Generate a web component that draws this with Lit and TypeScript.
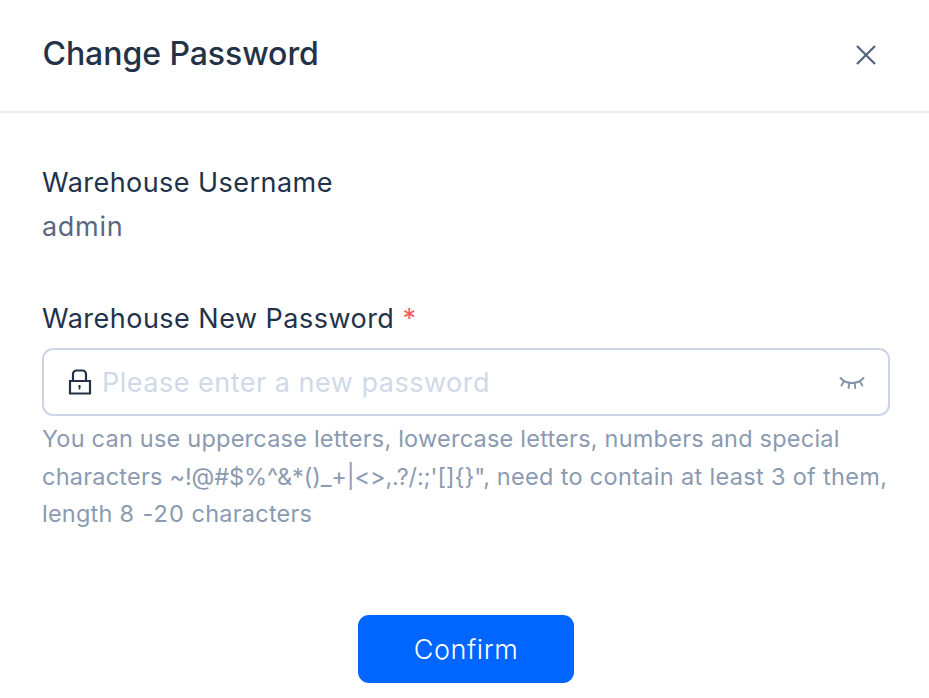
import { LitElement, html, css } from "lit";
import { customElement } from "lit/decorators.js";

@customElement("app-root")
export class AppRoot extends LitElement {
  static styles = css`
    :host { display: block; height: 698px; overflow: hidden; background: #fff; color: #233248; font-family: Inter, sans-serif; }
    * { box-sizing: border-box; }
    header { display: flex; justify-content: space-between; align-items: center; height: 113px; padding: 0 53px 3px 42.5px; border-bottom: 2px solid #ebeff4; }
    h1 { margin: 0; font-size: 32px; line-height: 40px; font-weight: 500; letter-spacing: -0.06px; }
    button { font: inherit; border: 0; padding: 0; background: none; color: inherit; }
    svg { display: block; fill: none; stroke: currentColor; }
    .close { color: #56647d; margin-top: 1px; }
    main { padding: 48px 39px 0 42px; }
    .label { font-size: 27px; line-height: 44px; letter-spacing: 0.45px; white-space: nowrap; }
    .value { font-size: 27px; line-height: 44px; color: #5a6880; letter-spacing: 0.7px; }
    .field { margin-top: 48px; letter-spacing: 0.48px; }
    .star { color: #ff5c5c; }
    .input { display: flex; align-items: center; height: 68px; margin-top: 7px; padding: 0 23px 0 24px; border: 2px solid #cbd5e6; border-radius: 11px; }
    .placeholder { flex: 1; margin-left: 10px; font-size: 27px; color: #d0d9e7; letter-spacing: 0.5px; }
    .eye { color: #8796ad; margin-top: 2px; }
    .hint { margin-top: 4px; font-size: 23.5px; line-height: 37.5px; color: #8b9ab0; letter-spacing: 0.22px; white-space: nowrap; }
    .symbols { letter-spacing: -0.1px; }
    .clause { letter-spacing: 0.32px; }
    .range { letter-spacing: 1px; }
    .confirm { display: block; width: 216px; height: 68px; margin: 82px auto 0; padding-top: 2px; border-radius: 11px; background: #0066ff; color: #fff; font-size: 27px; font-weight: 350; letter-spacing: 0.55px; }
  `;
  render() {
    return html`
      <header><h1>Change Password</h1>
        <button class="close" aria-label="Close"><svg width="20" height="20" viewBox="0 0 20 20" stroke-width="2.3"><path d="M1 1L19 19M19 1L1 19"/></svg></button>
      </header>
      <main>
        <div class="label">Warehouse Username</div>
        <div class="value">admin</div>
        <div class="label field">Warehouse New Password <span class="star">*</span></div>
        <div class="input">
          <svg width="24" height="28" viewBox="0 0 24 28" stroke-width="2.2"><path d="M2 13H22V25.5H2ZM5 13V6a3.5 3.5 0 0 1 3.5-3.5h6a3.5 3.5 0 0 1 3.5 3.5v7"/><path d="M11.5 17v4.5M10.3 18.5h2.4" stroke-width="1.6"/></svg>
          <span class="placeholder">Please enter a new password</span>
          <svg class="eye" width="26" height="16" viewBox="0 0 26 16" stroke-width="2" stroke-linecap="round"><path d="M1.5 3C7 9.5 19 9.5 24.5 3M4.8 6.5L2.5 10.5M10.3 8.3L9.5 13M15.7 8.3L16.2 13M21 6.5L23.3 10.5"/></svg>
        </div>
        <div class="hint">
          <div>You can use uppercase letters, lowercase letters, numbers and special</div>
          <div>characters <span class="symbols">~!@#$%^&amp;*()_+|&lt;&gt;,.?/:;'[]{}",</span><span class="clause"> need to contain at least 3 of them,</span></div>
          <div>length <span class="range">8 -20</span> characters</div>
        </div>
        <button class="confirm">Confirm</button>
      </main>`;
  }
}
